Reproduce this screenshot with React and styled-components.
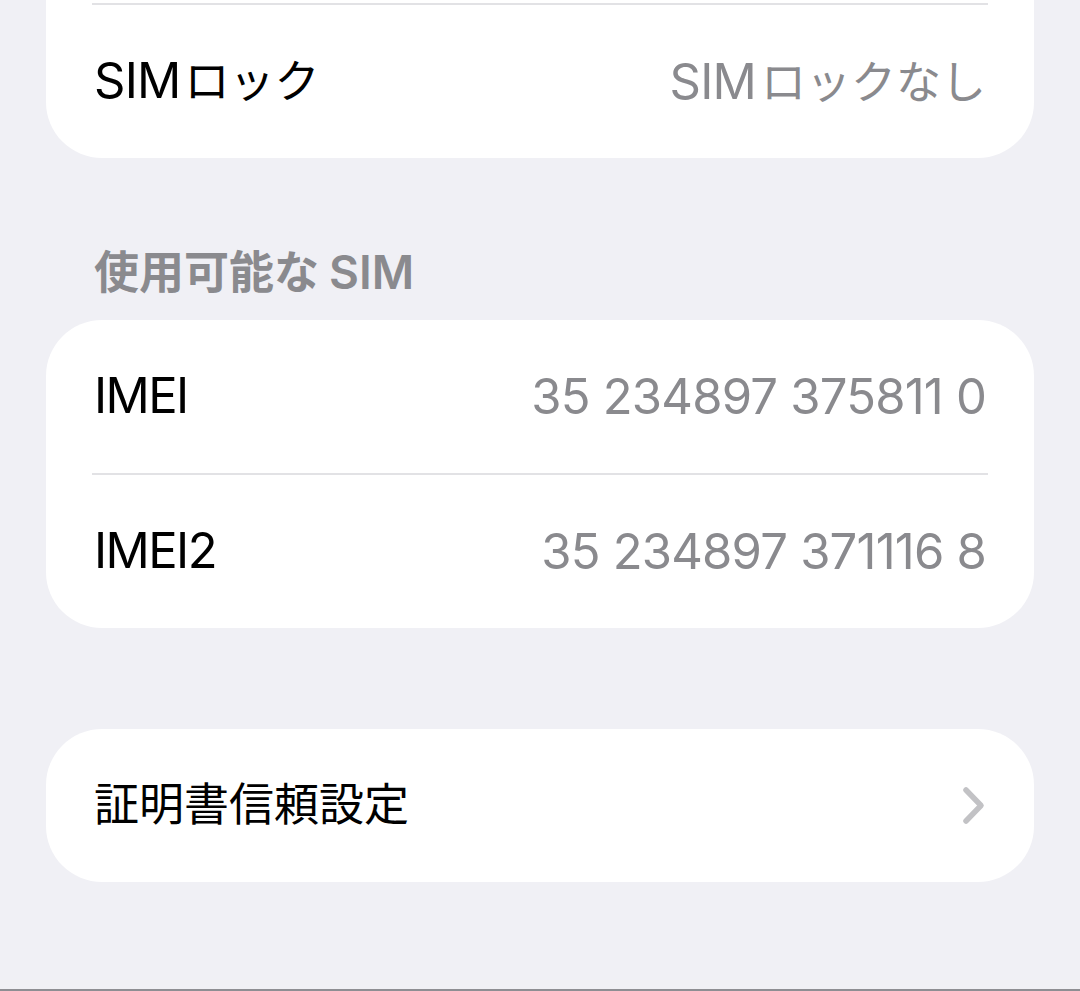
import React from "react";
import styled, { createGlobalStyle, css } from "styled-components";

const GlobalStyle = createGlobalStyle`
  html, body {
    margin: 0;
    padding: 0;
    background: #f0f0f5;
  }
  body {
    font-family: "Inter", "Noto Sans CJK JP", sans-serif;
    -webkit-font-smoothing: antialiased;
  }
`;

const Page = styled.div`
  box-sizing: border-box;
  height: 991px;
  padding: 0 46px;
  background: #f0f0f5;
  border-bottom: 2px solid #8e8e93;
  overflow: hidden;
  display: flex;
  flex-direction: column;
`;

const Card = styled.div`
  background: #ffffff;
  border-radius: 56px;
  display: flex;
  flex-direction: column;
  margin-top: ${(p) => p.$gap || 0}px;
  ${(p) =>
    p.$cutTop &&
    css`
      border-top-left-radius: 0;
      border-top-right-radius: 0;
      padding-top: 3px;
    `}
`;

const Separator = styled.div`
  height: 2px;
  background: #e2e2e5;
  margin: 0 46px;
`;

const Row = styled.div`
  height: 153px;
  padding: 0 48px;
  display: flex;
  align-items: center;
  justify-content: space-between;
`;

const Label = styled.span`
  font-size: 45px;
  color: #000000;
  line-height: 1;
  white-space: nowrap;
  transform: translateY(-1px);
`;

const Value = styled.span`
  font-size: 45px;
  color: #8a8a8e;
  line-height: 1;
  white-space: nowrap;
`;

const Latin = styled.span`
  font-family: "Inter", sans-serif;
  font-size: ${(p) => p.$size || 49}px;
  letter-spacing: ${(p) => p.$track ?? -0.8}px;
  margin-right: ${(p) => p.$space || 0}px;
  margin-left: ${(p) => p.$lead || 0}px;
`;

const SectionHeader = styled.div`
  padding: 87px 48px 20px;
  font-size: 45px;
  line-height: 54px;
  font-weight: 600;
  color: #8a8a8e;
  white-space: nowrap;
`;

const Chevron = () => (
  <svg width="26" height="40" viewBox="0 0 26 40" aria-hidden="true">
    <polyline
      points="6,4 21,19.5 6,35"
      fill="none"
      stroke="#c2c2c5"
      strokeWidth="5.5"
      strokeLinecap="round"
      strokeLinejoin="round"
    />
  </svg>
);

export default function App() {
  return (
    <>
      <GlobalStyle />
      <Page>
        <Card $cutTop>
          <Separator />
          <Row>
            <Label>
              <Latin $space={4}>SIM</Latin>ロック
            </Label>
            <Value>
              <Latin $space={5}>SIM</Latin>ロックなし
            </Value>
          </Row>
        </Card>

        <SectionHeader>
          使用可能な
          <Latin $size={46} $track={0} $lead={10}>
            SIM
          </Latin>
        </SectionHeader>

        <Card>
          <Row>
            <Label>
              <Latin $track={-1.6}>IMEI</Latin>
            </Label>
            <Value>
              <Latin>35 234897 375811 0</Latin>
            </Value>
          </Row>
          <Separator />
          <Row>
            <Label>
              <Latin $track={-1.6}>IMEI2</Latin>
            </Label>
            <Value>
              <Latin>35 234897 371116 8</Latin>
            </Value>
          </Row>
        </Card>

        <Card $gap={101}>
          <Row>
            <Label>証明書信頼設定</Label>
            <Chevron />
          </Row>
        </Card>
      </Page>
    </>
  );
}
